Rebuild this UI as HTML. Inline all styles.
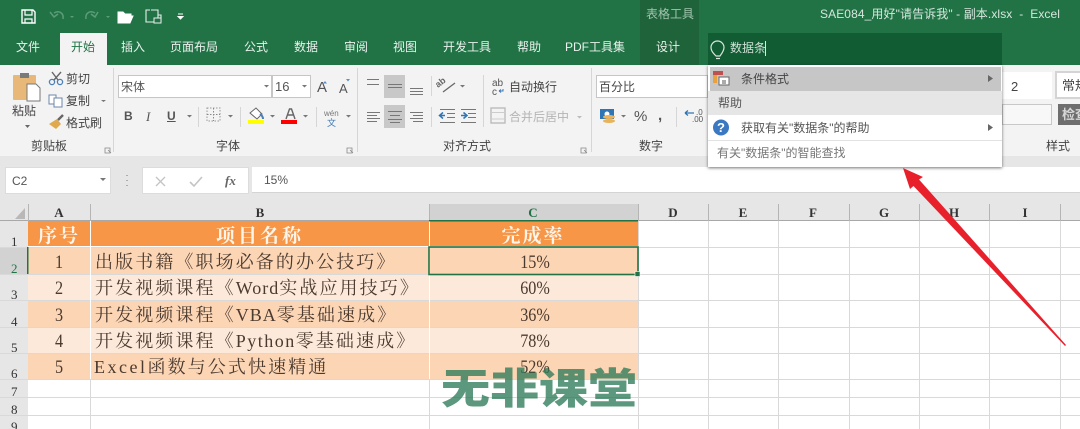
<!DOCTYPE html>
<html><head><meta charset="utf-8">
<style>
html,body{margin:0;padding:0}
#p{position:relative;width:1080px;height:429px;overflow:hidden;background:#fff;font-family:"Liberation Sans","Noto Sans CJK SC",sans-serif;font-size:12px;color:#444;filter:blur(.35px)}
.t,.c,.b{position:absolute;white-space:nowrap;line-height:1}
.c{transform:translateX(-50%)}
.b{display:block}
.tab{color:#e8f1ec;top:41px;font-size:12px}
.gl{color:#444;top:140px;font-size:12px}
.hd{font-family:"Liberation Serif","Noto Serif CJK SC",serif;font-weight:700;font-size:13px;color:#333;top:206px}
.rn{font-family:"Liberation Serif","Noto Serif CJK SC",serif;font-size:13px;color:#333;left:11px}
.cell{font-family:"Liberation Serif","Noto Serif CJK SC",serif;font-size:19px;color:#4a3a30;transform:translateX(-50%) scaleX(.85)}
.cj{font-family:"Noto Serif CJK SC","Liberation Serif",serif;font-size:18px;letter-spacing:2.1px;color:#4a3a30;left:95px}
.cj i{font-style:normal;font-family:"Liberation Serif",serif;letter-spacing:1px;font-size:18px}
.h1{font-family:"Noto Serif CJK SC",serif;font-size:19px;font-weight:700;color:#fff5ea;top:225px}
svg{position:absolute;left:0;top:0}
</style></head><body><div id="p">
<div class="b" style="left:0;top:0;width:1080px;height:65px;background:#217346"></div>
<div class="b" style="left:640px;top:0;width:59px;height:65px;background:#1e6339"></div>
<div class="b" style="left:60px;top:33px;width:47px;height:33px;background:#f3f3f3"></div>
<div class="b" style="left:0;top:65px;width:1080px;height:91px;background:#f3f3f3"></div>
<div class="b" style="left:0;top:156px;width:1080px;height:48px;background:#e6e6e6"></div>
<div class="b" style="left:5px;top:167px;width:106px;height:27px;background:#fff;border:1px solid #dcdcdc;box-sizing:border-box"></div>
<div class="b" style="left:142px;top:167px;width:107px;height:27px;background:#fff;border:1px solid #dcdcdc;box-sizing:border-box"></div>
<div class="b" style="left:252px;top:167px;width:828px;height:26px;background:#fff;border-bottom:1px solid #d4d4d4;box-sizing:border-box"></div>
<div class="b" style="left:0;top:204px;width:1080px;height:17px;background:#e6e6e6;border-bottom:1px solid #a8a8a8;box-sizing:border-box"></div>
<div class="b" style="left:429px;top:204px;width:209px;height:17px;background:#d2d2d2"></div>
<div class="b" style="left:0;top:221px;width:28px;height:208px;background:#e6e6e6"></div>
<div class="b" style="left:0;top:247px;width:28px;height:27px;background:#d2d2d2"></div>

<!-- grid -->
<svg width="1080" height="429" style="z-index:1">
<g stroke="#d9d9d9" stroke-width="1">
<path d="M0 247.5H1080M0 274.5H1080M0 300.5H1080M0 327.5H1080M0 353.5H1080M0 379.5H1080M0 397.5H1080M0 415.5H1080"/>
<path d="M90.5 379V429M429.5 379V429M638.5 221V429M778.5 221V429M849.5 221V429M919.5 221V429M989.5 221V429M1060.5 221V429M708.5 221V429"/>
</g>
<g stroke="#b5b5b5"><path d="M28.5 204V221M90.5 204V221M429.5 204V221M638.5 204V221M708.5 204V221M778.5 204V221M849.5 204V221M919.5 204V221M989.5 204V221M1060.5 204V221"/></g>
<rect x="28" y="221" width="610" height="25" fill="#f79646"/>
<rect x="28" y="248" width="610" height="26" fill="#fcd5b4"/>
<rect x="28" y="275" width="610" height="25" fill="#fde9d9"/>
<rect x="28" y="301" width="610" height="26" fill="#fcd5b4"/>
<rect x="28" y="328" width="610" height="25" fill="#fde9d9"/>
<rect x="28" y="354" width="610" height="25" fill="#fcd5b4"/>
<path d="M90.5 221V379M429.5 221V379" stroke="#fff"/>
<rect x="429" y="220" width="209" height="1.5" fill="#217346"/>
<rect x="27" y="247" width="1.5" height="27" fill="#217346"/>
<rect x="429" y="247" width="209" height="27.5" fill="none" stroke="#217346" stroke-width="1.6"/>
<rect x="635" y="271.5" width="5" height="5" fill="#217346" stroke="#fff" stroke-width=".6"/>
<path d="M25 208V219H15Z" fill="#b8b8b8"/>
</svg>

<div style="position:absolute;inset:0;z-index:2">
<span class="c tab" style="left:28px">文件</span>
<span class="c tab" style="left:83px;color:#217346">开始</span>
<span class="c tab" style="left:133px">插入</span>
<span class="c tab" style="left:194px">页面布局</span>
<span class="c tab" style="left:256px">公式</span>
<span class="c tab" style="left:306px">数据</span>
<span class="c tab" style="left:356px">审阅</span>
<span class="c tab" style="left:405px">视图</span>
<span class="c tab" style="left:467px">开发工具</span>
<span class="c tab" style="left:529px">帮助</span>
<span class="c tab" style="left:595px">PDF工具集</span>
<span class="c tab" style="left:668px">设计</span>
<span class="c" style="left:670px;top:8px;color:#a3c4b0;font-size:12px">表格工具</span>
<span class="t" style="left:820px;top:8px;color:#d6e6dd;font-size:12px;letter-spacing:.1px">SAE084_用好"请告诉我" - 副本.xlsx&nbsp; -&nbsp; Excel</span>

<span class="c" style="left:24px;top:105px;font-size:12px">粘贴</span>
<span class="t" style="left:66px;top:73px">剪切</span>
<span class="t" style="left:66px;top:95px">复制</span>
<span class="t" style="left:66px;top:117px">格式刷</span>
<span class="c gl" style="left:49px">剪贴板</span>
<span class="c gl" style="left:228px">字体</span>
<span class="c gl" style="left:467px">对齐方式</span>
<span class="c gl" style="left:651px">数字</span>
<span class="c gl" style="left:1058px">样式</span>
<div class="b" style="left:118px;top:75px;width:154px;height:23px;background:#fff;border:1px solid #c6c6c6;box-sizing:border-box"></div>
<div class="b" style="left:272px;top:75px;width:39px;height:23px;background:#fff;border:1px solid #c6c6c6;box-sizing:border-box"></div>
<span class="t" style="left:121px;top:81px;font-size:12px;color:#555">宋体</span>
<span class="t" style="left:275px;top:80px;font-size:13px;color:#555">16</span>
<span class="t" style="left:124px;top:110px;font-weight:700;font-size:12px;color:#555">B</span>
<span class="t" style="left:146px;top:110px;font-style:italic;font-family:'Liberation Serif',serif;font-size:13px;color:#555">I</span>
<span class="t" style="left:167px;top:110px;font-weight:700;font-size:12px;color:#555;text-decoration:underline">U</span>
<span class="t" style="left:317px;top:80px;font-size:15px;color:#555">A</span>
<span class="t" style="left:339px;top:82px;font-size:13px;color:#555">A</span>
<span class="t" style="left:509px;top:81px;font-size:12px">自动换行</span>
<span class="t" style="left:509px;top:111px;font-size:12px;color:#b4b4b4">合并后居中</span>
<div class="b" style="left:596px;top:75px;width:112px;height:23px;background:#fff;border:1px solid #c6c6c6;box-sizing:border-box"></div>
<span class="t" style="left:599px;top:81px;font-size:12px">百分比</span>
<span class="t" style="left:634px;top:109px;font-size:15px;color:#555">%</span>
<span class="t" style="left:658px;top:108px;font-size:15px;font-weight:700;color:#555">,</span>
<span class="t" style="left:692px;top:116px;font-size:8px;color:#555">.00</span>

<div class="b" style="left:1002px;top:72px;width:50px;height:27px;background:#fff"></div>
<div class="b" style="left:1055px;top:71px;width:30px;height:28px;background:#fff;border:2px solid #d4d4d4;box-sizing:border-box"></div>
<span class="t" style="left:1011px;top:80px;font-size:13px;color:#444">2</span>
<span class="t" style="left:1062px;top:79px;font-size:13px;color:#444">常规</span>
<div class="b" style="left:1002px;top:104px;width:50px;height:21px;background:#f8f8f8;border:1px solid #c8c8c8;box-sizing:border-box"></div>
<div class="b" style="left:1058px;top:104px;width:30px;height:21px;background:#6e6e6e"></div>
<span class="t" style="left:1062px;top:108px;font-size:13px;font-weight:700;color:#d8d8d8">检查</span>

<span class="t" style="left:12px;top:175px;font-size:12px;color:#555">C2</span>
<span class="t" style="left:264px;top:174px;font-size:12px;color:#555">15%</span>
<span class="t" style="left:225px;top:174px;font-family:'Liberation Serif',serif;font-style:italic;font-weight:700;font-size:13px;color:#666">fx</span>

<span class="c hd" style="left:59px">A</span><span class="c hd" style="left:260px">B</span><span class="c hd" style="left:533px;color:#217346">C</span><span class="c hd" style="left:673px">D</span><span class="c hd" style="left:743px">E</span><span class="c hd" style="left:813px">F</span><span class="c hd" style="left:884px">G</span><span class="c hd" style="left:954px">H</span><span class="c hd" style="left:1025px">I</span>
<span class="rn" style="position:absolute;top:234px">1</span><span class="rn" style="position:absolute;top:261px;color:#217346">2</span><span class="rn" style="position:absolute;top:287px">3</span><span class="rn" style="position:absolute;top:314px">4</span><span class="rn" style="position:absolute;top:340px">5</span><span class="rn" style="position:absolute;top:366px">6</span><span class="rn" style="position:absolute;top:384px">7</span><span class="rn" style="position:absolute;top:402px">8</span><span class="rn" style="position:absolute;top:419px">9</span>

<span class="c h1" style="left:59px;letter-spacing:2px">序号</span>
<span class="c h1" style="left:260px;letter-spacing:3px">项目名称</span>
<span class="c h1" style="left:533px;letter-spacing:2px">完成率</span>
<span class="c cell" style="left:59px;top:253px">1</span><span class="c cell" style="left:59px;top:279px">2</span><span class="c cell" style="left:59px;top:306px">3</span><span class="c cell" style="left:59px;top:332px">4</span><span class="c cell" style="left:59px;top:358px">5</span>
<span class="t cj" style="top:252px">出版书籍《职场必备的办公技巧》</span>
<span class="t cj" style="top:278px">开发视频课程《<i>Word</i>实战应用技巧》</span>
<span class="t cj" style="top:305px">开发视频课程《<i>VBA</i>零基础速成》</span>
<span class="t cj" style="top:331px">开发视频课程《<i style="letter-spacing:1.5px">Python</i>零基础速成》</span>
<span class="t cj" style="top:357px;left:94px"><i style="letter-spacing:2.5px">Excel</i>函数与公式快速精通</span>
<span class="c cell" style="left:535px;top:253px">15%</span><span class="c cell" style="left:535px;top:279px">60%</span><span class="c cell" style="left:535px;top:306px">36%</span><span class="c cell" style="left:535px;top:332px">78%</span><span class="c cell" style="left:535px;top:358px">52%</span>

<div class="b" style="left:438px;top:362px;width:200px;height:54px;overflow:hidden">
<span class="t" style="left:3px;top:3px;font-family:'Noto Sans CJK SC',sans-serif;font-weight:900;font-size:49px;color:rgba(40,120,85,.76);transform:scaleY(.86);transform-origin:0 0">无非课堂</span></div>
</div>

<svg width="1080" height="429" style="z-index:3">
<g fill="none" stroke="#fff" stroke-width="1.4"><path d="M22 10H33L35 12V23H22Z"/><path d="M25 10V15H32V10M25 23V19H32V23" stroke-width="1.2"/></g>
<g fill="none" stroke="#5c9c78" stroke-width="1.5"><path d="M54 13C59 10 64 13 63 19M50 12L54 17L58 14M95 13C90 10 85 13 86 19M98 12L95 17L91 14"/></g>
<path d="M70 16l2 2 2-2M106 16l2 2 2-2" fill="#5c9c78"/>
<path d="M118 16V12H123L125 14H131V16M118 16H133L130 23H118Z" fill="#fff" stroke="#fff"/>
<g fill="none" stroke="#e6efe9" stroke-width="1.1"><path d="M151 10H158V22H146V10H150M158 15H161V22"/></g><rect x="154" y="18" width="7" height="5" fill="#217346" stroke="#e6efe9"/>
<path d="M178 14h5M178 16.5l2.5 2.5 2.5-2.5z" fill="#fff" stroke="#fff"/>
<rect x="13" y="75" width="23" height="25" fill="#e8b878" rx="1"/><rect x="20" y="73" width="9" height="5" fill="#7a7a7a"/>
<path d="M27 84H36L40 88V101H27Z" fill="#fff" stroke="#777"/>
<path d="M25 125l2.5 3 2.5-3z" fill="#666"/>
<g fill="none" stroke="#4a7fb8" stroke-width="1.3"><circle cx="52" cy="82" r="2.6"/><circle cx="60" cy="82" r="2.6"/></g><path d="M52 72L58 80M61 72L54 80" stroke="#666" stroke-width="1.4"/>
<g fill="#fff" stroke="#6c87a8"><path d="M49 95H56V104H49Z"/><path d="M54 98H62V107H54Z"/></g>
<path d="M101 100l2.500 2 2.500-2z" fill="#777"/>
<path d="M49 124L57 119L61 124L56 129Z" fill="#e0a94e"/><path d="M58 120L63 115" stroke="#666" stroke-width="2.400"/>
<path d="M264 85l2.500 2.500 2.500-2.500zM302 85l2.500 2.500 2.500-2.500zM187 115l2.500 2.500 2.500-2.500zM228 115l2.500 2.500 2.500-2.500zM270 115l2.500 2.500 2.500-2.500zM303 115l2.500 2.500 2.500-2.500zM346 115l2.500 2.500 2.500-2.500z" fill="#777"/>
<path d="M325 81l2 2.500h-4zM346 79h4l-2 2.500z" fill="#5b8fc7"/>
<path d="M113.500 68V152M357.500 68V152M591.500 68V152M198.500 107V127M240.500 107V127M316.500 107V127M431.500 76V96M431.500 107V127M483.500 75V127M676.500 107V127" stroke="#d6d6d6"/>
<rect x="207" y="108" width="13" height="13" fill="none" stroke="#999" stroke-dasharray="1.500 1.500"/><path d="M213.500 108V121M207 114.500H220" stroke="#888" stroke-dasharray="1.500 1.500"/>
<path d="M250 113l6-5 6 6-5 5z" fill="#fff" stroke="#666"/><path d="M260 114q3 2 3 5" stroke="#4a7fb8" fill="none" stroke-width="2"/><rect x="248" y="120" width="16" height="4" fill="#ffff00"/>
<path d="M286 119L289.500 109H291.500L295 119M287.500 115H293.500" fill="none" stroke="#666" stroke-width="1.400"/><rect x="281" y="120" width="16" height="4" fill="#f00"/>
<text x="324" y="116" font-size="8" fill="#777" font-family="Liberation Sans">wén</text><text x="327" y="126" font-size="9" fill="#3b78b8" font-family="Noto Sans CJK SC">文</text>
<rect x="384" y="75" width="21" height="23" fill="#c8c8c8"/><rect x="384" y="105" width="21" height="23" fill="#c8c8c8"/>
<g stroke="#777" stroke-width="1"><path d="M367 79.500H379M367 84.500H379"/><path d="M388 84.500H402M388 87.500H402"/><path d="M410 88.500H423M410 91.500H423M410 94.500H423"/>
<path d="M367 112.500H380M367 115.500H377M367 118.500H380M367 121.500H377"/><path d="M388 111.500H402M390 115.500H400M388 119.500H402M390 122.500H400"/><path d="M410 112.500H423M413 115.500H423M410 118.500H423M413 121.500H423"/>
<path d="M440 109.500H455M447 113.500H455M447 117.500H455M440 122.500H455"/><path d="M461 109.500H476M468 113.500H476M468 117.500H476M461 122.500H476"/></g>
<path d="M445 115.500L440 115.500M443 112.500L439.500 115.500L443 118.500M461 115.500H466M463.500 112.500L467 115.500L463.500 118.500" stroke="#2e75b6" fill="none" stroke-width="1.500"/>
<text x="438" y="88" font-size="9" fill="#666" font-family="Liberation Sans" transform="rotate(-38 438 88)" font-weight="700">ab</text><path d="M443 92L455 83" stroke="#666" stroke-width="1.300" fill="none"/><path d="M460 85l2.500 2.500 2.500-2.500z" fill="#777"/>
<text x="492" y="86" font-size="10" fill="#555" font-family="Liberation Sans">ab</text><text x="492" y="95" font-size="10" fill="#555" font-family="Liberation Sans">c</text><path d="M499 91h4v-2M499 91l2-1.500M499 91l2 1.500" stroke="#3b78b8" fill="none"/>
<rect x="491" y="108" width="14" height="15" fill="none" stroke="#bbb" stroke-width="1.400"/><path d="M491 112.500H505M491 119H505" stroke="#ccc"/>
<path d="M577 116l2.500 2.500 2.500-2.500z" fill="#bbb"/>
<path d="M105 148h5v5h-5z M108 150l3 3" stroke="#888" fill="none" stroke-width=".8"/><path d="M347 148h5v5h-5z M350 150l3 3" stroke="#888" fill="none" stroke-width=".8"/><path d="M581 148h5v5h-5z M584 150l3 3" stroke="#888" fill="none" stroke-width=".8"/>
<rect x="600" y="109" width="14" height="10" fill="#2e75b6"/><circle cx="607" cy="114" r="2.500" fill="#fff"/><g fill="#e8b35a"><ellipse cx="609" cy="117" rx="6" ry="2"/><ellipse cx="609" cy="121" rx="6" ry="2"/></g>
<path d="M621 115l2.500 2.500 2.500-2.500z" fill="#777"/>
<path d="M685 113H694M685 113l3-2.500M685 113l3 2.500" stroke="#2e75b6" fill="none" stroke-width="1.300"/>
<text x="696" y="115" font-size="8" fill="#555" font-family="Liberation Sans">.0</text>
<path d="M100 178l3 3 3-3z" fill="#777"/><path d="M127 175v1M127 180v1M127 185v1" stroke="#999" stroke-width="1.500"/>
<path d="M156 177l9 9M165 177l-9 9" stroke="#c4c4c4" stroke-width="1.300"/><path d="M190 182l4 4 8-9" stroke="#c4c4c4" stroke-width="1.600" fill="none"/>
</svg>

<div class="b" style="left:708px;top:33px;width:294px;height:32px;background:#125c34;z-index:4"></div>
<div class="b" style="left:708px;top:65px;width:294px;height:102px;background:#fff;z-index:4;box-shadow:0 1px 3px rgba(0,0,0,.55)"></div>
<div class="b" style="left:710px;top:67px;width:291px;height:24px;background:#c6c6c6;z-index:4"></div>
<div class="b" style="left:708px;top:91px;width:294px;height:24px;background:#e6e6e6;z-index:4"></div>
<div class="b" style="left:708px;top:140px;width:294px;height:1px;background:#e2e2e2;z-index:4"></div>
<div style="position:absolute;inset:0;z-index:5">
<span class="t" style="left:730px;top:42px;font-size:12px;color:#cfe0d6">数据条</span>
<div class="b" style="left:765px;top:41px;width:1px;height:15px;background:#dfe9e3"></div>
<span class="t" style="left:741px;top:73px;color:#444">条件格式</span>
<span class="t" style="left:718px;top:97px;color:#555">帮助</span>
<span class="t" style="left:741px;top:122px;color:#555">获取有关"数据条"的帮助</span>
<span class="t" style="left:717px;top:147px;color:#777">有关"数据条"的智能查找</span>
</div>
<svg width="1080" height="429" style="z-index:6">
<g fill="none" stroke="#d8e6dd" stroke-width="1.200"><path d="M716 56C712 52 711 50 711 47.500A6.500 6.500 0 0 1 724 47.500C724 50 723 52 720 56Z"/><path d="M716 58.500H720"/></g>
<rect x="713" y="71" width="10" height="4" fill="#c0504d"/><rect x="713" y="75" width="4" height="8" fill="#e9a23b"/><rect x="719" y="77" width="10" height="8" fill="#fff" stroke="#666"/><path d="M722 81h4M722 83h4" stroke="#555"/>
<path d="M988 75l5 3.500-5 3.500zM988 124l5 3.500-5 3.500z" fill="#666"/>
<circle cx="721" cy="127.500" r="8" fill="#3b78c2"/><text x="717" y="132" font-size="13" font-weight="700" fill="#fff" font-family="Liberation Sans">?</text>
<path d="M903 168L923 177L919 179.500L1066 345L1065 346L913.500 186L910 189Z" fill="#e8202c"/>
</svg>
</div></body></html>
